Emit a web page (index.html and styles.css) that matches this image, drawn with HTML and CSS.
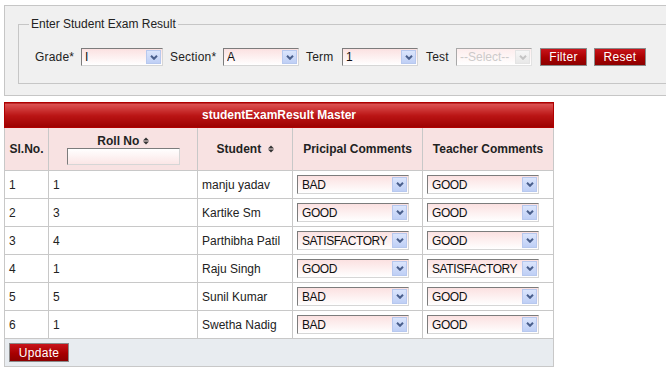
FILE: index.html
```html
<!DOCTYPE html>
<html lang="en">
<head>
    <meta charset="UTF-8">
    <title>Student Exam Result</title>
    <link rel="stylesheet" href="styles.css">
</head>
<body>
    <div class="filter-box">
        <fieldset class="filter-set">
            <legend>Enter Student Exam Result</legend>
            <div class="filter-row">
                <label class="lbl lbl-grade">Grade*</label>
                <span class="combo w-grade">
                    <select><option>I</option></select>
                    <span class="combo-btn"><svg width="8" height="5" viewBox="0 0 8 5"><polyline points="1,0.8 4,3.8 7,0.8" /></svg></span>
                </span>
                <label class="lbl lbl-section">Section*</label>
                <span class="combo w-small">
                    <select><option>A</option></select>
                    <span class="combo-btn"><svg width="8" height="5" viewBox="0 0 8 5"><polyline points="1,0.8 4,3.8 7,0.8" /></svg></span>
                </span>
                <label class="lbl lbl-term">Term</label>
                <span class="combo w-small wide-gap">
                    <select><option>1</option></select>
                    <span class="combo-btn"><svg width="8" height="5" viewBox="0 0 8 5"><polyline points="1,0.8 4,3.8 7,0.8" /></svg></span>
                </span>
                <label class="lbl lbl-test">Test</label>
                <span class="combo w-small wide-gap disabled">
                    <select disabled><option>--Select--</option></select>
                    <span class="combo-btn"><svg width="8" height="5" viewBox="0 0 8 5"><polyline points="1,0.8 4,3.8 7,0.8" /></svg></span>
                </span>
                <button class="btn btn-filter">Filter</button>
                <button class="btn btn-reset">Reset</button>
            </div>
        </fieldset>
    </div>

    <table class="result-table">
        <colgroup>
            <col class="c-sl">
            <col class="c-roll">
            <col class="c-student">
            <col class="c-comment">
            <col class="c-comment2">
        </colgroup>
        <thead>
            <tr>
                <th class="title-bar" colspan="5">studentExamResult Master</th>
            </tr>
            <tr class="col-head">
                <th>Sl.No.</th>
                <th class="roll-head">
                    <div class="roll-title">Roll No <svg class="sort" width="6" height="8" viewBox="0 0 6 8"><polygon points="0,3.4 3,0.4 6,3.4" /><polygon points="0,4.6 3,7.6 6,4.6" /></svg></div>
                    <input class="roll-input" type="text">
                </th>
                <th>Student <svg class="sort sort-gap" width="6" height="8" viewBox="0 0 6 8"><polygon points="0,3.4 3,0.4 6,3.4" /><polygon points="0,4.6 3,7.6 6,4.6" /></svg></th>
                <th>Pricipal Comments</th>
                <th>Teacher Comments</th>
            </tr>
        </thead>
        <tbody id="resultBody"></tbody>
        <tfoot>
            <tr>
                <td class="foot-cell" colspan="5"><button class="btn btn-update">Update</button></td>
            </tr>
        </tfoot>
    </table>

    <script>
        // Rows of the result sheet
        const rows = [
            { roll: 1, name: 'manju yadav', principal: 'BAD', teacher: 'GOOD' },
            { roll: 3, name: 'Kartike Sm', principal: 'GOOD', teacher: 'GOOD' },
            { roll: 4, name: 'Parthibha Patil', principal: 'SATISFACTORY', teacher: 'GOOD' },
            { roll: 1, name: 'Raju Singh', principal: 'GOOD', teacher: 'SATISFACTORY' },
            { roll: 5, name: 'Sunil Kumar', principal: 'BAD', teacher: 'GOOD' },
            { roll: 1, name: 'Swetha Nadig', principal: 'BAD', teacher: 'GOOD' }
        ];

        const options = ['GOOD', 'SATISFACTORY', 'BAD'];
        const arrow = '<span class="combo-btn"><svg width="8" height="5" viewBox="0 0 8 5"><polyline points="1,0.8 4,3.8 7,0.8" /></svg></span>';

        function comboHtml(value) {
            const opts = options.map(o => '<option' + (o === value ? ' selected' : '') + '>' + o + '</option>').join('');
            return '<span class="combo w-cell"><select>' + opts + '</select>' + arrow + '</span>';
        }

        const body = document.getElementById('resultBody');
        rows.forEach((r, i) => {
            const tr = document.createElement('tr');
            tr.innerHTML =
                '<td>' + (i + 1) + '</td>' +
                '<td>' + r.roll + '</td>' +
                '<td>' + r.name + '</td>' +
                '<td>' + comboHtml(r.principal) + '</td>' +
                '<td>' + comboHtml(r.teacher) + '</td>';
            body.appendChild(tr);
        });
    </script>
</body>
</html>
```

FILE: styles.css
```css
html, body {
    margin: 0;
    padding: 0;
    overflow: hidden;
}

body {
    font-family: 'Liberation Sans', Arial, sans-serif;
    font-size: 12px;
    color: #000;
    background: #fff;
}

/* Filter panel */
.filter-box {
    box-sizing: border-box;
    margin: 5px 0 0 4px;
    width: 720px;
    height: 91px;
    padding: 11px 0 0 13px;
    border: 1px solid #c6c6c6;
    background: #f0f0f0;
}

.filter-set {
    box-sizing: border-box;
    margin: 0;
    width: 700px;
    height: 67px;
    padding: 0 0 0 10px;
    border: 1px solid #c6c6c6;
}

.filter-set legend {
    padding: 0 2px;
    color: #222;
}

.filter-row {
    display: flex;
    align-items: center;
    margin: 17px 0 0 6px;
    height: 18px;
}

.lbl {
    flex: none;
    margin-right: 6px;
    color: #222;
    white-space: nowrap;
    letter-spacing: 0.2px;
}

.lbl-grade { width: 40px; }
.lbl-section { width: 47px; }
.lbl-term { width: 30px; }
.lbl-test { width: 24px; }

/* Combo boxes */
.combo {
    box-sizing: border-box;
    flex: none;
    display: inline-flex;
    align-items: stretch;
    height: 18px;
    margin-right: 7px;
    border: 1px solid;
    border-color: #7c7c7c #d6d6d6 #d6d6d6 #7c7c7c;
    background: linear-gradient(#fbe1e1, #ffffff);
}

.combo.wide-gap {
    margin-right: 8px;
}

.combo select {
    flex: 1;
    min-width: 0;
    margin: 0;
    padding: 0 0 0 3px;
    border: none;
    background: transparent;
    font-family: inherit;
    font-size: 12px;
    color: #111;
    -webkit-appearance: none;
    appearance: none;
    outline: none;
}

.combo-btn {
    box-sizing: border-box;
    width: 15px;
    margin: 1px;
    display: flex;
    align-items: center;
    justify-content: center;
    border: 1px solid #b7c8ee;
    background: linear-gradient(#dbe5fc, #bfcff5);
}

.combo-btn polyline {
    fill: none;
    stroke: #4a5f8c;
    stroke-width: 2;
}

.combo.disabled {
    border-color: #a8a8a8 #e2e2e2 #e2e2e2 #a8a8a8;
    background: linear-gradient(#fdeded, #ffffff);
}

.combo.disabled select {
    color: #b8b8b8;
}

.combo.disabled .combo-btn {
    border-color: #e4e4e4;
    background: linear-gradient(#f6f6f6, #e8e8e8);
}

.combo.disabled .combo-btn polyline {
    stroke: #c4c4c4;
}

.w-grade {
    width: 82px;
}

.w-small {
    width: 76px;
}

.w-cell {
    width: 112px;
    height: 19px;
    margin-right: 0;
    vertical-align: middle;
}

.w-cell select {
    letter-spacing: -0.4px;
    padding-left: 4px;
}

/* Red buttons */
.btn {
    box-sizing: border-box;
    flex: none;
    height: 18px;
    padding: 0;
    border: 1px solid #8a8a8a;
    background: linear-gradient(#c8141b, #a80000 55%, #8c0000);
    color: #fff;
    font-family: inherit;
    font-size: 12px;
    letter-spacing: 0.3px;
    cursor: pointer;
}

.btn-filter {
    width: 47px;
    margin-right: 7px;
}

.btn-reset {
    width: 52px;
}

.btn-update {
    width: 60px;
    height: 19px;
    display: block;
}

/* Result table */
.result-table {
    margin: 6px 0 0 4px;
    width: 549px;
    border-collapse: collapse;
    table-layout: fixed;
}

.c-sl { width: 44px; }
.c-roll { width: 149px; }
.c-student { width: 95px; }
.c-comment { width: 130px; }
.c-comment2 { width: 131px; }

.result-table th,
.result-table td {
    border: 1px solid #c8c8c8;
}

.title-bar {
    height: 24px;
    padding: 0;
    background: linear-gradient(#de5555, #bb1515 50%, #9c0000);
    color: #fff;
    font-weight: bold;
    text-align: center;
    border-color: #b00000 !important;
}

.col-head th {
    height: 42px;
    padding: 0;
    background: #f8e2e2;
    color: #222;
    font-weight: bold;
    text-align: center;
    vertical-align: middle;
}

.col-head th.roll-head {
    vertical-align: top;
}

.roll-title {
    margin-top: 6px;
    height: 14px;
}

.roll-input {
    box-sizing: border-box;
    display: block;
    width: 113px;
    height: 17px;
    margin: 0 auto;
    border: 1px solid;
    border-color: #7c7c7c #d6d6d6 #d6d6d6 #7c7c7c;
    background: linear-gradient(#ffffff, #fbe6e6);
}

.sort {
    vertical-align: 0;
}

.sort polygon {
    fill: #333;
}

.sort-gap {
    margin-left: 3px;
}

.result-table tbody td {
    height: 27px;
    padding: 0 4px;
    color: #222;
    vertical-align: middle;
    white-space: nowrap;
}

.foot-cell {
    height: 27px;
    padding: 0 4px;
    background: #e8ecf0;
    vertical-align: middle;
}
```
